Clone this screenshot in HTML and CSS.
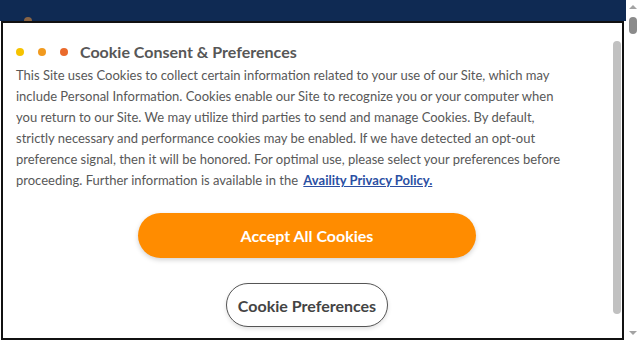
FILE: index.html
```html
<!DOCTYPE html>
<html lang="en">
<head>
<meta charset="utf-8">
<title>Cookie Consent</title>
<link rel="stylesheet" href="styles.css">
</head>
<body>
<div class="page">
  <div class="topbar"><span class="logo-peek"></span></div>
  <div class="dialog">
    <div class="dialog-content">
      <div class="title-row">
        <span class="dot dot-yellow"></span>
        <span class="dot dot-orange"></span>
        <span class="dot dot-red"></span>
        <h1 class="title">Cookie Consent &amp; Preferences</h1>
      </div>
      <p class="body-text">This Site uses Cookies to collect certain information related to your use of our Site, which may include Personal Information. Cookies enable our Site to recognize you or your computer when you return to our Site. We may utilize third parties to send and manage Cookies. By default, strictly necessary and performance cookies may be enabled. If we have detected an opt-out preference signal, then it will be honored. For optimal use, please select your preferences before proceeding. Further information is available in the <a class="link" href="#">Availity Privacy Policy.</a></p>
      <div class="actions">
        <button class="btn btn-accept">Accept All Cookies</button>
        <button class="btn btn-prefs">Cookie Preferences</button>
      </div>
    </div>
    <div class="inner-track"><div class="inner-thumb"></div></div>
  </div>
</div>
<div class="page-scrollbar">
  <span class="arrow arrow-up"></span>
  <div class="page-thumb"></div>
  <span class="arrow arrow-down"></span>
</div>
</body>
</html>
```

FILE: styles.css
```css
html, body {
  margin: 0;
  padding: 0;
  height: 341px;
  overflow: hidden;
  background: #ffffff;
}
body {
  display: flex;
  font-family: Lato, "Open Sans", Arial, sans-serif;
}
.page {
  width: 626px;
  display: flex;
  flex-direction: column;
}
.topbar {
  height: 21px;
  background: #0f2a53;
  position: relative;
}
.logo-peek {
  position: absolute;
  left: 24px;
  top: 17px;
  width: 8px;
  height: 4px;
  border-radius: 4px 4px 0 0;
  background: #d98a3a;
  opacity: 0.6;
}
.dialog {
  margin-left: 1px;
  width: 623px;
  height: 319px;
  box-sizing: border-box;
  border: 2px solid #111111;
  display: flex;
  background: #ffffff;
}
.dialog-content {
  flex: 1;
  padding: 18px 0 0 0;
  display: flex;
  flex-direction: column;
}
.title-row {
  display: flex;
  align-items: center;
  height: 20px;
  padding-left: 13px;
}
.dot {
  width: 8px;
  height: 8px;
  border-radius: 50%;
  margin-right: 14px;
  margin-top: 2px;
}
.dot-yellow { background: #f6c300; }
.dot-orange { background: #f19a1f; }
.dot-red { background: #ea6a2c; margin-right: 12px; }
.title {
  margin: 0;
  font-size: 16px;
  font-weight: 700;
  color: #575757;
}
.body-text {
  margin: 4px 0 0 13px;
  width: 556px;
  font-size: 13px;
  line-height: 21px;
  color: #585858;
}
.link {
  color: #2b4fa3;
  font-weight: 700;
  text-decoration: underline;
  margin-left: 2px;
}
.actions {
  display: flex;
  flex-direction: column;
  align-items: center;
  gap: 25px;
  margin-top: 22px;
  padding-right: 2px;
}
.btn {
  font-family: Lato, "Open Sans", Arial, sans-serif;
  font-weight: 700;
  font-size: 16px;
  border-radius: 23px;
  cursor: pointer;
}
.btn-accept {
  width: 338px;
  height: 45px;
  background: #ff8c00;
  color: #ffffff;
  border: none;
  box-shadow: 0 2px 5px rgba(0, 0, 0, 0.18);
}
.btn-prefs {
  width: 162px;
  height: 44px;
  background: #ffffff;
  color: #444444;
  border: 1px solid #555555;
  box-shadow: 0 2px 4px rgba(0, 0, 0, 0.12);
}
.inner-track {
  width: 8px;
  padding: 18px 1px 0 0;
}
.inner-thumb {
  height: 273px;
  background: #c1c1c1;
  border-radius: 4px;
}
.page-scrollbar {
  width: 14px;
  display: flex;
  flex-direction: column;
  align-items: center;
  background: #ffffff;
}
.arrow {
  width: 0;
  height: 0;
  border-left: 4px solid transparent;
  border-right: 4px solid transparent;
}
.arrow-up {
  margin-top: 5px;
  border-bottom: 4px solid #a3a3a3;
}
.arrow-down {
  margin-top: auto;
  margin-bottom: 6px;
  border-top: 4px solid #a3a3a3;
}
.page-thumb {
  width: 8px;
  height: 17px;
  margin-top: 8px;
  border-radius: 4px;
  background: #8b8b8b;
}
```
